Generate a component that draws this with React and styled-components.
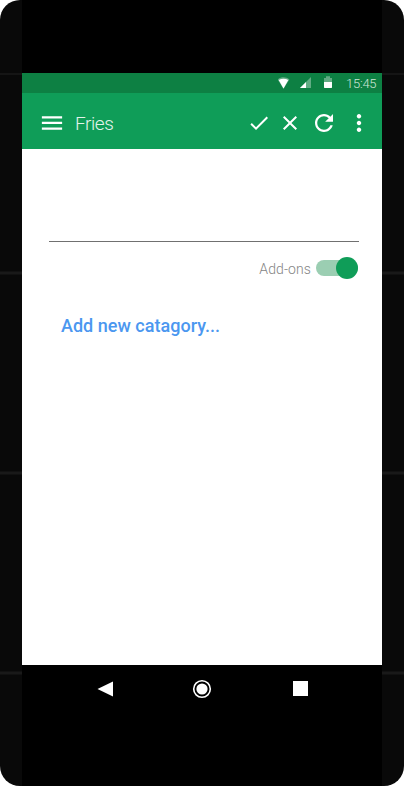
import React from 'react';
import styled, { createGlobalStyle } from 'styled-components';

const GlobalStyle = createGlobalStyle`
  * { box-sizing: border-box; }
  body { margin: 0; background: #fff; font-family: Roboto, sans-serif; }
  svg { display: block; flex: none; }
`;

const Phone = styled.div`
  width: 404px;
  height: 786px;
  padding: 0 22px;
  border-radius: 20px;
  overflow: hidden;
  background:
    linear-gradient(#151515, #151515) 0 73px / 100% 2px no-repeat,
    linear-gradient(#111 0 1px, #191919 1px 3px, #111 3px 4px) 0 271px / 100% 4px no-repeat,
    linear-gradient(#111 0 1px, #191919 1px 3px, #111 3px 4px) 0 471px / 100% 4px no-repeat,
    linear-gradient(#111 0 1px, #191919 1px 3px, #111 3px 4px) 0 671px / 100% 4px no-repeat,
    #090909;
`;

const Device = styled.div`
  height: 100%;
  padding-top: 73px;
  background: #000;
  display: flex;
  flex-direction: column;
`;

const StatusBar = styled.div`
  height: 20px;
  flex: none;
  display: flex;
  justify-content: flex-end;
  align-items: center;
  padding-right: 5px;
  background: #0d8043;
`;

const Clock = styled.time`
  margin-left: 14px;
  padding-top: 1px;
  width: 31px;
  font-size: 13px;
  font-weight: 300;
  line-height: 18px;
  letter-spacing: -0.25px;
  white-space: nowrap;
  color: #cfe6d9;
`;

const AppBar = styled.header`
  height: 56px;
  flex: none;
  display: flex;
  align-items: center;
  padding: 4px 9px 0 16px;
  background: #0f9d58;
  color: #fff;
`;

const Title = styled.h1`
  flex: 1;
  margin: 0 0 0 9px;
  padding-top: 2px;
  font-size: 19px;
  font-weight: 300;
  line-height: 24px;
  letter-spacing: -0.45px;
  color: #e2f3ea;
`;

const Actions = styled.div`
  display: flex;
  align-items: center;
`;

const IconButton = styled.button`
  display: block;
  margin: 0 0 0 ${(p) => p.$gap || 0}px;
  padding: 0;
  border: 0;
  background: none;
  color: inherit;
`;

const Content = styled.main`
  height: 516px;
  flex: none;
  padding: 0 23px 0 27px;
  background: #fff;
`;

const NameInput = styled.input`
  display: block;
  width: 100%;
  height: 93px;
  padding: 0;
  border: 0;
  border-bottom: 1px solid #707070;
  border-radius: 0;
  outline: 0;
  background: none;
`;

const ToggleRow = styled.label`
  display: flex;
  justify-content: flex-end;
  align-items: center;
  height: 22px;
  margin-top: 15px;
  padding-right: 1px;
`;

const ToggleLabel = styled.span`
  padding-top: 2px;
  margin-right: 5px;
  font-size: 14px;
  font-weight: 300;
  line-height: 20px;
  letter-spacing: 0.1px;
  color: #858585;
`;

const Track = styled.span`
  display: flex;
  justify-content: flex-end;
  align-items: center;
  width: 42px;
  height: 16px;
  border-radius: 8px;
  background: #9bceb2;
`;

const Thumb = styled.span`
  flex: none;
  width: 22px;
  height: 22px;
  border-radius: 50%;
  background: #0f9d58;
`;

const AddCategory = styled.button`
  display: block;
  margin: 35px 0 0 12px;
  padding: 0;
  border: 0;
  background: none;
  font: 500 18px/24px Roboto, sans-serif;
  letter-spacing: 0.02px;
  white-space: nowrap;
  color: #4b97f0;
`;

const NavBar = styled.nav`
  height: 48px;
  flex: none;
  display: grid;
  grid-template-columns: 16px 20px 15px;
  column-gap: 79px;
  align-items: center;
  padding-left: 75px;

  & > :last-child { margin-left: 2px; }
`;

const SmallIcon = ({ d }) => (
  <svg width="24" height="24" viewBox="0 0 24 24" fill="currentColor">
    <path d={d} />
  </svg>
);

const LargeIcon = ({ d }) => (
  <svg width="28" height="28" viewBox="-0.444 -0.444 24.889 24.889" fill="currentColor">
    <path d={d} />
  </svg>
);

export default function App() {
  return (
    <>
      <GlobalStyle />
      <Phone>
        <Device>
          <StatusBar>
            <svg width="54" height="20" viewBox="0 0 54 20" fill="#fff">
              <path d="M-.3 6.5C2.8 3.6 8.2 3.6 11.4 6.5L5.5 15.8z" opacity=".35" />
              <path d="M.7 7C3.6 5.2 7.4 5.2 10.3 7L5.5 15.5z" />
              <path d="M33 4v11H22z" opacity=".35" />
              <path d="M28 9v6h-6z" />
              <path d="M46 5h2V3.3h4V5h2v4h-8z" opacity=".35" />
              <path d="M46 9h8v5.5l-.5.5h-7l-.5-.5z" />
            </svg>
            <Clock>15:45</Clock>
          </StatusBar>
          <AppBar>
            <IconButton aria-label="Menu">
              <LargeIcon d="M3 18h18v-2H3v2zm0-5h18v-2H3v2zm0-7v2h18V6H3z" />
            </IconButton>
            <Title>Fries</Title>
            <Actions>
              <IconButton aria-label="Save">
                <SmallIcon d="M9 16.17L4.83 12l-1.42 1.41L9 19 21 7l-1.41-1.41z" />
              </IconButton>
              <IconButton aria-label="Discard" $gap={7}>
                <SmallIcon d="M19 6.41L17.59 5 12 10.59 6.41 5 5 6.41 10.59 12 5 17.59 6.41 19 12 13.41 17.59 19 19 17.59 13.41 12z" />
              </IconButton>
              <IconButton aria-label="Refresh" $gap={8}>
                <LargeIcon d="M17.65 6.35C16.2 4.9 14.21 4 12 4c-4.42 0-7.99 3.58-7.99 8s3.57 8 7.99 8c3.73 0 6.84-2.55 7.73-6h-2.08c-.82 2.33-3.04 4-5.65 4-3.31 0-6-2.69-6-6s2.69-6 6-6c1.66 0 3.14.69 4.22 1.78L13 11h7V4l-2.35 2.35z" />
              </IconButton>
              <IconButton aria-label="More" $gap={7}>
                <LargeIcon d="M12 8c1.1 0 2-.9 2-2s-.9-2-2-2-2 .9-2 2 .9 2 2 2zm0 2c-1.1 0-2 .9-2 2s.9 2 2 2 2-.9 2-2-.9-2-2-2zm0 6c-1.1 0-2 .9-2 2s.9 2 2 2 2-.9 2-2-.9-2-2-2z" />
              </IconButton>
            </Actions>
          </AppBar>
          <Content>
            <NameInput aria-label="Name" />
            <ToggleRow>
              <ToggleLabel>Add-ons</ToggleLabel>
              <Track>
                <Thumb />
              </Track>
            </ToggleRow>
            <AddCategory>Add new catagory...</AddCategory>
          </Content>
          <NavBar>
            <svg width="16" height="16" viewBox="0 0 16 16" fill="#fff">
              <path d="M.5 8L16 .5v15z" />
            </svg>
            <svg width="20" height="20" viewBox="0 0 20 20" fill="#fff">
              <circle cx="10" cy="10" r="8.3" fill="none" stroke="#fff" strokeWidth="1.6" />
              <circle cx="10" cy="10" r="5.6" />
            </svg>
            <svg width="15" height="16" viewBox="0 0 15 16" fill="#fff">
              <path d="M0 0h15v15H0z" />
            </svg>
          </NavBar>
        </Device>
      </Phone>
    </>
  );
}
